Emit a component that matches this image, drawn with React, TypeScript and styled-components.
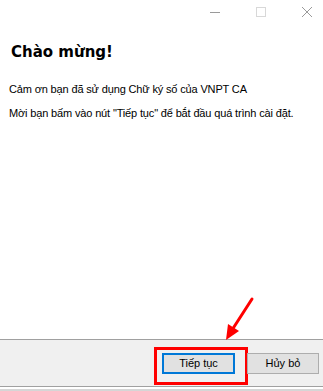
import styled, { createGlobalStyle } from "styled-components";

const Global = createGlobalStyle`
  html, body {
    margin: 0;
    padding: 0;
    background: #ffffff;
  }
`;

export const Window = styled.div`
  position: relative;
  width: 323px;
  height: 391px;
  overflow: hidden;
  display: flex;
  flex-direction: column;
  background: #ffffff;
  font-family: "Liberation Sans", Arial, sans-serif;
  color: #000000;
`;

export const TitleBar = styled.div`
  height: 24px;
  display: flex;
  justify-content: flex-end;
  align-items: center;
  padding-right: 10px;
  gap: 34px;
`;

export const CaptionButton = styled.div`
  width: 12px;
  height: 12px;
  display: flex;
  align-items: center;
  justify-content: center;
`;

export const Body = styled.div`
  flex: 1;
  padding: 19px 9px 0 9px;
`;

export const Heading = styled.h1`
  margin: 0 0 0 2px;
  font-family: "DejaVu Sans", Verdana, sans-serif;
  font-weight: bold;
  font-size: 15px;
  line-height: 18px;
`;

export const Paragraph = styled.p`
  margin: 0;
  font-size: 11px;
  line-height: 13px;
  letter-spacing: -0.15px;
  & + & {
    margin-top: 11px;
  }
`;

export const Intro = styled.div`
  margin-top: 22px;
`;

export const Footer = styled.div`
  height: 46px;
  border-top: 1px solid #a0a0a0;
  border-bottom: 1px solid #a0a0a0;
  background: #f0f0f0;
  display: flex;
  justify-content: flex-end;
  align-items: center;
  gap: 12px;
  padding-right: 4px;
  margin-bottom: 2px;
`;

export const Button = styled.button<{ $primary?: boolean }>`
  position: relative;
  box-sizing: border-box;
  width: ${(p) => (p.$primary ? "73px" : "72px")};
  height: 21px;
  padding: 0;
  background: #e1e1e1;
  border: ${(p) => (p.$primary ? "2px solid #0078d7" : "1px solid #adadad")};
  font-family: "Liberation Sans", Arial, sans-serif;
  font-size: 11px;
  color: #000000;
`;

export const Highlight = styled.span`
  position: absolute;
  left: -10px;
  top: -8px;
  width: 94px;
  height: 38px;
  box-sizing: border-box;
  border: 3px solid #ff0000;
  pointer-events: none;
`;

export const Arrow = styled.svg`
  position: absolute;
  left: 218px;
  top: 293px;
`;

export const BottomEdge = styled.div`
  height: 2px;
  background: #d6d6d6;
`;

const App = () => {
  return (
    <Window>
      <Global />
      <TitleBar>
        <CaptionButton>
          <svg width="12" height="12" viewBox="0 0 12 12">
            <line x1="1" y1="6.5" x2="11" y2="6.5" stroke="#9a9a9a" strokeWidth="1" />
          </svg>
        </CaptionButton>
        <CaptionButton>
          <svg width="12" height="12" viewBox="0 0 12 12">
            <rect x="1.5" y="1.5" width="9" height="9" fill="none" stroke="#d8d8d8" strokeWidth="1" />
          </svg>
        </CaptionButton>
        <CaptionButton>
          <svg width="12" height="12" viewBox="0 0 12 12">
            <path d="M1 1 L11 11 M11 1 L1 11" stroke="#9a9a9a" strokeWidth="1" />
          </svg>
        </CaptionButton>
      </TitleBar>
      <Body>
        <Heading>Chào mừng!</Heading>
        <Intro>
          <Paragraph>Cảm ơn bạn đã sử dụng Chữ ký số của VNPT CA</Paragraph>
          <Paragraph>Mời bạn bấm vào nút "Tiếp tục" để bắt đầu quá trình cài đặt.</Paragraph>
        </Intro>
      </Body>
      <Footer>
        <Button $primary>
          Tiếp tục
          <Highlight />
        </Button>
        <Button>Hủy bỏ</Button>
      </Footer>
      <BottomEdge />
      <Arrow width="40" height="50" viewBox="0 0 40 50">
        <line x1="34" y1="6" x2="14" y2="37" stroke="#ff0000" strokeWidth="3" strokeLinecap="round" />
        <polygon points="8,47 10,31 21,38" fill="#ff0000" />
      </Arrow>
    </Window>
  );
};

export default App;
